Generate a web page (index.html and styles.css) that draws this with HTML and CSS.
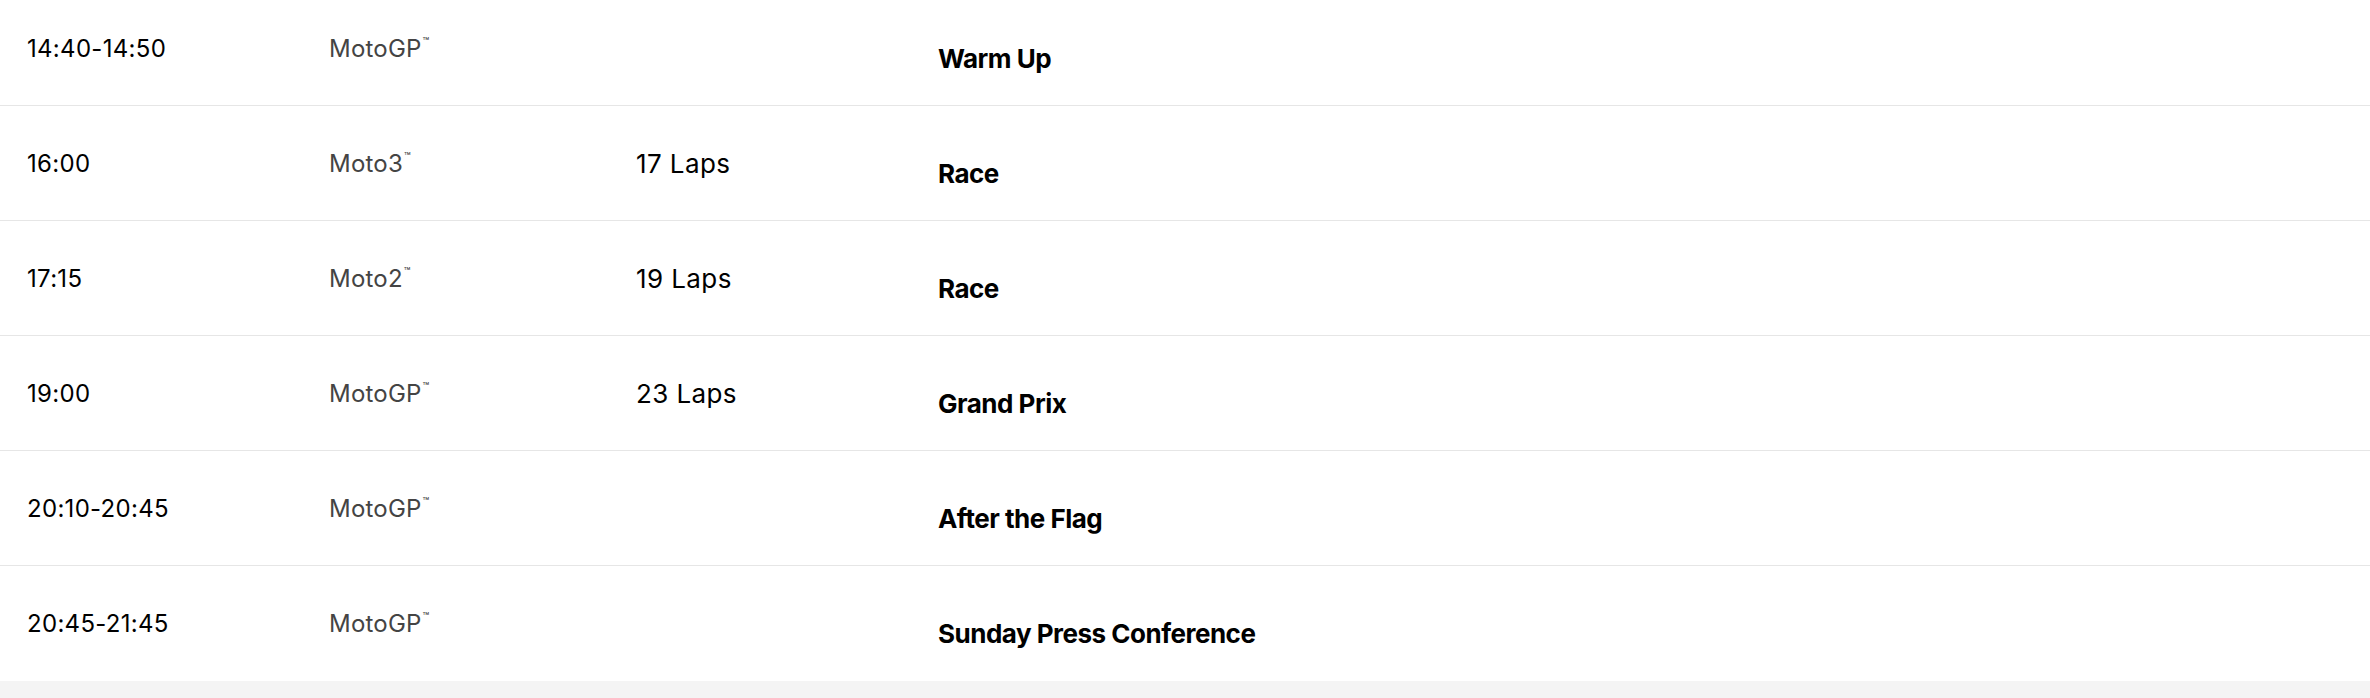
FILE: index.html
```html
<!DOCTYPE html>
<html lang="en">
<head>
<meta charset="utf-8">
<title>Schedule</title>
<link rel="stylesheet" href="styles.css">
</head>
<body>
<div class="schedule">
  <div class="row">
    <div class="time">14:40-14:50</div>
    <div class="cat">MotoGP<sup class="tm">™</sup></div>
    <div class="laps"></div>
    <div class="title">Warm Up</div>
  </div>
  <div class="row">
    <div class="time">16:00</div>
    <div class="cat">Moto3<sup class="tm">™</sup></div>
    <div class="laps">17 Laps</div>
    <div class="title">Race</div>
  </div>
  <div class="row">
    <div class="time">17:15</div>
    <div class="cat">Moto2<sup class="tm">™</sup></div>
    <div class="laps">19 Laps</div>
    <div class="title">Race</div>
  </div>
  <div class="row">
    <div class="time">19:00</div>
    <div class="cat">MotoGP<sup class="tm">™</sup></div>
    <div class="laps">23 Laps</div>
    <div class="title">Grand Prix</div>
  </div>
  <div class="row">
    <div class="time">20:10-20:45</div>
    <div class="cat">MotoGP<sup class="tm">™</sup></div>
    <div class="laps"></div>
    <div class="title">After the Flag</div>
  </div>
  <div class="row">
    <div class="time">20:45-21:45</div>
    <div class="cat">MotoGP<sup class="tm">™</sup></div>
    <div class="laps"></div>
    <div class="title">Sunday Press Conference</div>
  </div>
</div>
<div class="footer-band"></div>
</body>
</html>
```

FILE: styles.css
```css
html, body {
  margin: 0;
  padding: 0;
  background: #ffffff;
}

body {
  font-family: Inter, "Noto Sans", "Liberation Sans", sans-serif;
  color: #000;
  overflow: hidden;
}

.schedule {
  margin-top: -9px;
  background: #fff;
}

.row {
  display: grid;
  grid-template-columns: 302px 307px 302px 1fr;
  height: 114px;
  box-sizing: content-box;
  padding-left: 27px;
  border-bottom: 1px solid #e6e6e6;
  align-items: start;
}

.row:last-child {
  border-bottom: none;
  height: 115px;
}

.time,
.cat,
.laps {
  padding-top: 42px;
  font-size: 24px;
  line-height: 32px;
  font-weight: 400;
}

.time {
  color: #000;
  letter-spacing: 0.3px;
}

.cat {
  color: #444;
  font-weight: 400;
  letter-spacing: 0.2px;
}

.tm {
  font-size: 11px;
  line-height: 0;
  vertical-align: 12px;
  margin-left: 1px;
  color: #444;
}

.laps {
  color: #000;
  font-size: 26px;
  letter-spacing: 0.4px;
  padding-top: 42px;
}

.title {
  padding-top: 50px;
  font-size: 26px;
  line-height: 36px;
  font-weight: 700;
  color: #000;
  letter-spacing: -0.5px;
}

.footer-band {
  height: 40px;
  background: #f4f4f4;
}
```
